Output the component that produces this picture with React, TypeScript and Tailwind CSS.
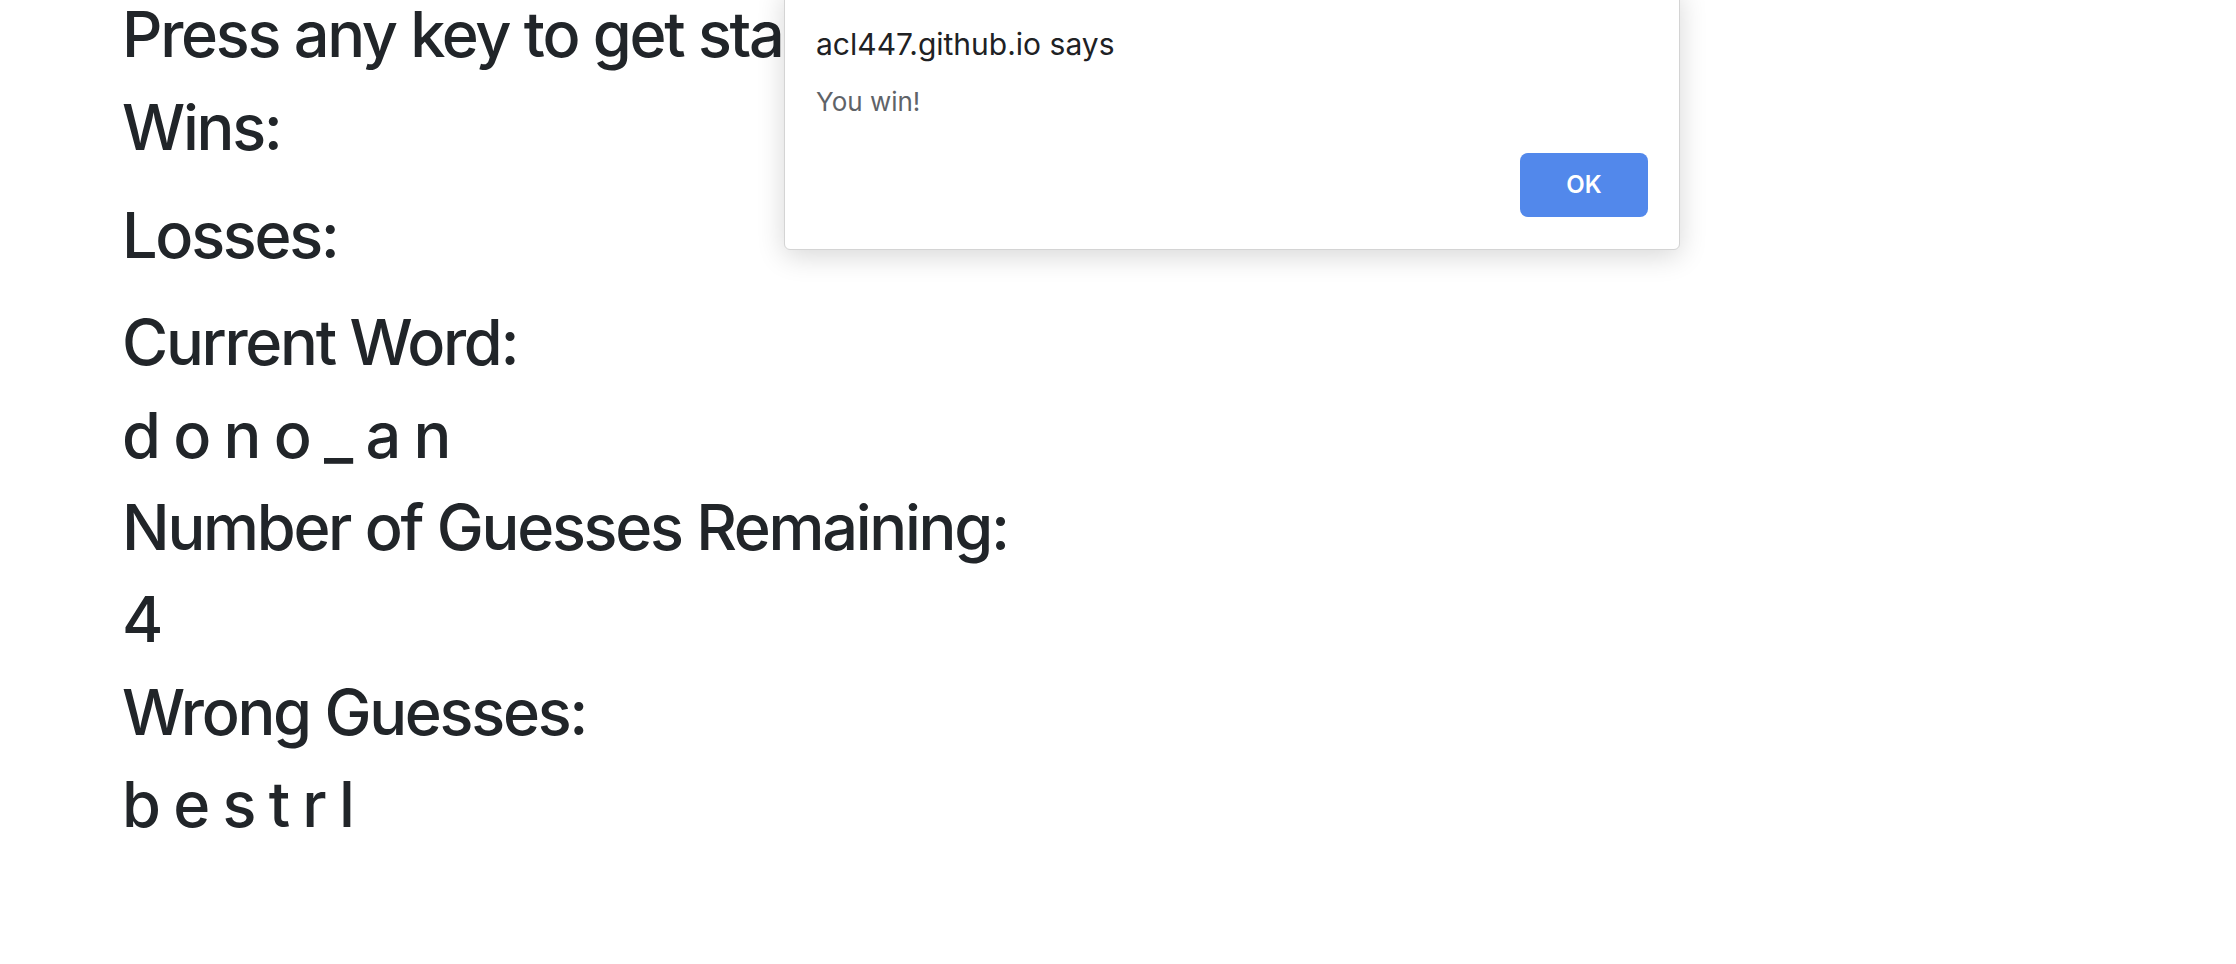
import React from "react";

const lines: { text: string; mb: string }[] = [
  { text: "Press any key to get started!", mb: "mb-[17px]" },
  { text: "Wins:", mb: "mb-[31px]" },
  { text: "Losses:", mb: "mb-[31px]" },
  { text: "Current Word:", mb: "mb-4" },
  { text: "d o n o _ a n", mb: "mb-4" },
  { text: "Number of Guesses Remaining:", mb: "mb-4" },
  { text: "4", mb: "mb-4" },
  { text: "Wrong Guesses:", mb: "mb-4" },
  { text: "b e s t r l", mb: "mb-4" },
];

export default function App() {
  return (
    <div className="relative w-full h-[964px] overflow-hidden bg-white font-['Inter','Liberation_Sans',sans-serif]">
      <div className="pl-[122px] -mt-[4px] text-[#212529]">
        {lines.map((l, i) => (
          <div
            key={i}
            className={`text-[63px] leading-[76.4px] font-medium tracking-[-0.036em] whitespace-pre ${l.mb}`}
          >
            {l.text}
          </div>
        ))}
      </div>

      <div className="absolute left-[784px] top-[-12px] w-[896px] h-[262px] bg-white border border-[#d4d4d4] rounded-b-[6px] shadow-[0_6px_28px_rgba(0,0,0,0.16)] flex flex-col px-[31px] pt-[38px]">
        <div className="text-[30px] leading-[34px] text-[#202124]">acl447.github.io says</div>
        <div className="mt-[25px] text-[26px] leading-[32px] text-[#5f6368]">You win!</div>
        <div className="mt-[35px] flex justify-end">
          <button className="w-[128px] h-[64px] rounded-[8px] bg-[#5288eb] text-white text-[24px] font-semibold">
            OK
          </button>
        </div>
      </div>
    </div>
  );
}
